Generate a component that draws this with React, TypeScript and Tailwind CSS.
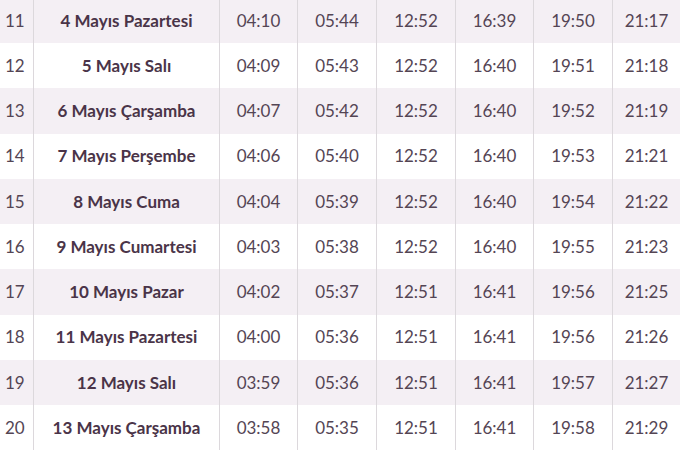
import React from "react";

const rows: [string, string, string[]][] = [
  ["11", "4 Mayıs Pazartesi", ["04:10", "05:44", "12:52", "16:39", "19:50", "21:17"]],
  ["12", "5 Mayıs Salı", ["04:09", "05:43", "12:52", "16:40", "19:51", "21:18"]],
  ["13", "6 Mayıs Çarşamba", ["04:07", "05:42", "12:52", "16:40", "19:52", "21:19"]],
  ["14", "7 Mayıs Perşembe", ["04:06", "05:40", "12:52", "16:40", "19:53", "21:21"]],
  ["15", "8 Mayıs Cuma", ["04:04", "05:39", "12:52", "16:40", "19:54", "21:22"]],
  ["16", "9 Mayıs Cumartesi", ["04:03", "05:38", "12:52", "16:40", "19:55", "21:23"]],
  ["17", "10 Mayıs Pazar", ["04:02", "05:37", "12:51", "16:41", "19:56", "21:25"]],
  ["18", "11 Mayıs Pazartesi", ["04:00", "05:36", "12:51", "16:41", "19:56", "21:26"]],
  ["19", "12 Mayıs Salı", ["03:59", "05:36", "12:51", "16:41", "19:57", "21:27"]],
  ["20", "13 Mayıs Çarşamba", ["03:58", "05:35", "12:51", "16:41", "19:58", "21:29"]],
];

const timeW = ["w-[78px]", "w-[79px]", "w-[79px]", "w-[78px]", "w-[79px]", "w-[67px]"];

export default function App() {
  return (
    <div className="w-[680px] h-[450px] overflow-hidden bg-white text-[#544554]" style={{ fontFamily: "Lato, 'Open Sans', sans-serif" }}>
      <div className="mt-[-2.25px]">
        {rows.map(([n, name, times], i) => (
          <div key={n} className={`flex h-[45.25px] items-center ${i % 2 === 0 ? "bg-[#f4eff4]" : "bg-white"}`}>
            <div className="w-[34px] h-full flex items-center pl-[5px] text-[17px] border-r border-[#dcd8dc]">{n}</div>
            <div className="w-[186px] h-full flex items-center justify-center text-[17px] font-bold text-[#4a3448] border-r border-[#dcd8dc]">{name}</div>
            {times.map((t, j) => (
              <div key={j} className={`${timeW[j]} h-full flex items-center justify-center text-[17px] ${j < 5 ? "border-r border-[#dcd8dc]" : ""}`}>{t}</div>
            ))}
          </div>
        ))}
      </div>
    </div>
  );
}
